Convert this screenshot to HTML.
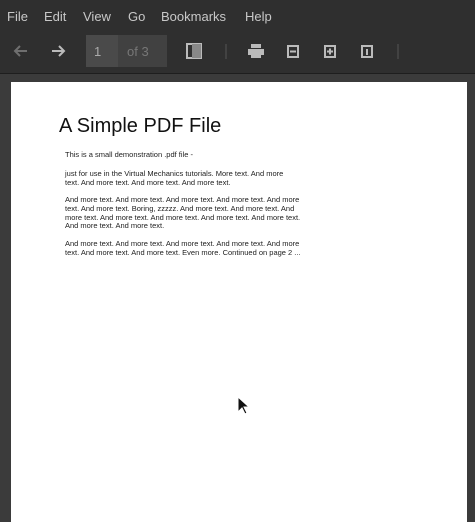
<!DOCTYPE html>
<html><head><style>
body{margin:0;width:475px;height:512px;overflow:hidden;background:#3b3b3b;font-family:"Liberation Sans",sans-serif;position:relative}
.top{position:absolute;left:0;top:0;width:475px;height:73px;background:#2f2f2f;border-bottom:1px solid #1e1e1e}
.menu span{position:absolute;top:9px;color:#c8c8c8;font-size:13px}
.ic{position:absolute}
.page{position:absolute;left:11px;top:82px;width:456px;height:440px;background:#fff}
.t{position:absolute;color:#222;font-size:7.5px;line-height:8.8px;white-space:nowrap}
</style></head><body>
<div class="top">
<div class="menu"><span style="left:7px">File</span><span style="left:44px">Edit</span><span style="left:83px">View</span><span style="left:128px">Go</span><span style="left:161px">Bookmarks</span><span style="left:245px">Help</span></div>
<svg class="ic" style="left:0;top:35px" width="475" height="32">
<g stroke="#6f6f6f" stroke-width="2" fill="none"><path d="M27 16H15M20 11l-5 5 5 5"/></g>
<g stroke="#bbb" stroke-width="2" fill="none"><path d="M52 16h12M59 11l5 5-5 5"/></g>
<rect x="86" y="0" width="32" height="32" fill="#4a4a4a"/>
<rect x="118" y="0" width="49" height="32" fill="#414141"/>
<text x="94" y="21" fill="#aaa" font-size="13" font-family="Liberation Sans">1</text>
<text x="127" y="21" fill="#777" font-size="13" font-family="Liberation Sans">of 3</text>
<rect x="187" y="9" width="14" height="14" fill="none" stroke="#bbb" stroke-width="2"/><rect x="192" y="9" width="9" height="14" fill="#888"/>
<line x1="226" y1="9" x2="226" y2="24" stroke="#555"/>
<path d="M251 9h10v4h-10zM248 14h16v6h-16zM251 19h10v4h-10z" fill="#bbb"/>
<rect x="288" y="11" width="10" height="11" fill="none" stroke="#bbb" stroke-width="2"/><path d="M290 16.5h6" stroke="#bbb" stroke-width="2"/>
<rect x="325" y="11" width="10" height="11" fill="none" stroke="#bbb" stroke-width="2"/><path d="M327 16.5h6M330 13.5v6" stroke="#bbb" stroke-width="2"/>
<rect x="362" y="11" width="10" height="11" fill="none" stroke="#bbb" stroke-width="2"/><path d="M367 14v6" stroke="#bbb" stroke-width="2"/>
<line x1="398" y1="9" x2="398" y2="24" stroke="#555"/>
</svg>
</div>
<div class="page">
<div style="position:absolute;left:48px;top:33px;font-size:20px;color:#111">A Simple PDF File</div>
<div class="t" style="left:54px;top:69px">This is a small demonstration .pdf file -</div>
<div class="t" style="left:54px;top:88px">just for use in the Virtual Mechanics tutorials. More text. And more<br>text. And more text. And more text. And more text.</div>
<div class="t" style="left:54px;top:114px">And more text. And more text. And more text. And more text. And more<br>text. And more text. Boring, zzzzz. And more text. And more text. And<br>more text. And more text. And more text. And more text. And more text.<br>And more text. And more text.</div>
<div class="t" style="left:54px;top:158px">And more text. And more text. And more text. And more text. And more<br>text. And more text. And more text. Even more. Continued on page 2 ...</div>
<svg style="position:absolute;left:226px;top:314px" width="14" height="20"><path d="M1 1v15l4-4 3 6 2-1-3-6h5z" fill="#111" stroke="#fff" stroke-width="1"/></svg>
</div>
</body></html>
